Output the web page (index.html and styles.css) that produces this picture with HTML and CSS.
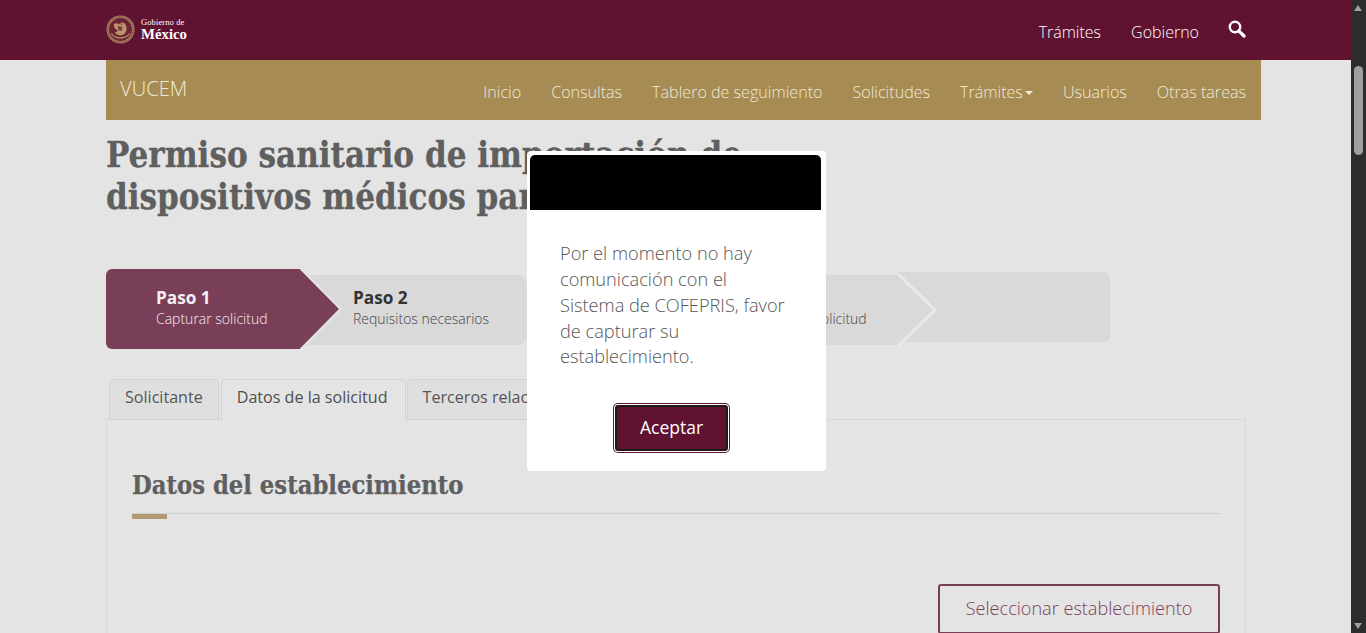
FILE: index.html
```html
<!DOCTYPE html>
<html lang="es">
<head>
<meta charset="utf-8">
<title>VUCEM</title>
<link rel="stylesheet" href="styles.css">
</head>
<body>
<div class="page">
  <header class="topbar">
    <div class="topbar-inner">
      <a class="logo">
        <svg class="emblem" viewBox="0 0 30 30" aria-hidden="true">
          <circle cx="15" cy="15" r="14.500" fill="#a9825a"/>
          <circle cx="15" cy="15" r="11.800" fill="#6b2336"/>
          <circle cx="15" cy="15" r="13.100" fill="none" stroke="#6b2336" stroke-width=".9" stroke-dasharray="1.500 1.200"/>
          <path d="M8 9.500c2-1.500 4-1 5.500.5 1-2.500 5-3 6.500-.5 2 3 1.500 6 .5 8-1.200 2.500-3.500 3.500-5.500 3.500s-5-1-6-3.500c1.500.5 3-.5 3.500-1.500-2.500-.5-4.500-3-4.500-6.500z" fill="#b9936a"/>
          <path d="M12 11.500l5 1-1 4-3-1zM15 8.500l2 .5-.5 2z" fill="#7d3a3f"/>
          <path d="M6 18.500c3 6 15 6 18 0l.8.6c-3 7-16.600 7-19.600 0z" fill="#b9936a"/>
        </svg>
        <span class="logo-text"><span class="logo-small">Gobierno de</span><span class="logo-big">México</span></span>
      </a>
      <nav class="topnav">
        <a>Trámites</a>
        <a>Gobierno</a>
        <svg class="search" viewBox="0 0 18 18" aria-hidden="true">
          <circle cx="7" cy="7" r="5.200" fill="none" stroke="#fff" stroke-width="2.400"/>
          <path d="M10.800 10.800 16 16" fill="none" stroke="#fff" stroke-width="3.200" stroke-linecap="round"/>
        </svg>
      </nav>
    </div>
  </header>

  <main class="container">
    <div class="subnav">
      <span class="brand">VUCEM</span>
      <nav class="subnav-links">
        <a>Inicio</a>
        <a>Consultas</a>
        <a>Tablero de seguimiento</a>
        <a>Solicitudes</a>
        <a class="dropdown">Trámites<i class="caret"></i></a>
        <a>Usuarios</a>
        <a>Otras tareas</a>
      </nav>
    </div>

    <h1 class="title">Permiso sanitario de importación de dispositivos médicos para uso personal</h1>

    <div class="steps">
      <div class="step step-active">
        <strong>Paso 1</strong>
        <span>Capturar solicitud</span>
        <svg class="arrow arrow-active" viewBox="0 0 42 84" aria-hidden="true"><path d="M0 2 39.500 42 0 82z" fill="#7a3f58"/><path d="M0 1 40.500 42 0 83" fill="none" stroke="#e4e4e4" stroke-width="2"/></svg>
      </div>
      <div class="step step-second">
        <strong>Paso 2</strong>
        <span>Requisitos necesarios</span>
      </div>
      <div class="step step-third">
        <strong>Paso 3</strong>
        <span>Firmar solicitud</span>
        <svg class="arrow arrow-plain" viewBox="0 0 40 74" aria-hidden="true"><path d="M0 2 36 37 0 72z" fill="#d9d9d9"/><path d="M0 1 37 37 0 73" fill="none" stroke="#e9e9e9" stroke-width="3"/></svg>
      </div>
      <div class="step step-last"></div>
    </div>

    <div class="tabs">
      <a class="tab">Solicitante</a>
      <a class="tab tab-current">Datos de la solicitud</a>
      <a class="tab">Terceros relacionados</a>
    </div>

    <section class="panel">
      <h2 class="section-title">Datos del establecimiento</h2>
      <div class="rule"></div>
      <div class="actions">
        <button class="btn-outline" type="button">Seleccionar establecimiento</button>
      </div>
    </section>
  </main>
</div>

<aside class="scrollbar" aria-hidden="true">
  <i class="sb-up"></i>
  <i class="sb-thumb"></i>
  <i class="sb-down"></i>
</aside>

<div class="modal" role="dialog">
  <div class="modal-head"></div>
  <p class="modal-text">Por el momento no hay comunicación con el Sistema de COFEPRIS, favor de capturar su establecimiento.</p>
  <div class="modal-foot"><button class="btn-primary" type="button">Aceptar</button></div>
</div>
</body>
</html>
```
FILE: styles.css
```css
* { box-sizing: border-box; }
html, body { height: 100%; margin: 0; }
body {
  display: flex;
  overflow: hidden;
  background: #e4e4e4;
  font-family: "Open Sans", "Noto Sans", sans-serif;
  color: #5c5c5c;
}
.page { flex: 1; min-width: 0; height: 100vh; overflow: hidden; }

.topbar { height: 60px; background: #601231; }
.topbar-inner {
  width: 1155px;
  height: 60px;
  margin-left: 106px;
  padding-right: 15px;
  display: flex;
  align-items: center;
  justify-content: space-between;
}
.logo { display: flex; align-items: center; gap: 6px; margin-top: -2px; }
.emblem { width: 29px; height: 29px; display: block; }
.logo-text { display: flex; flex-direction: column; color: #fff; font-family: "Liberation Serif", serif; margin-top: 1px; }
.logo-small { font-size: 8.500px; line-height: 9px; letter-spacing: .1px; }
.logo-big { font-size: 14.800px; line-height: 14px; font-weight: 700; }
.topnav { display: flex; align-items: center; gap: 30px; color: #fff; font-size: 16px; font-weight: 300; }
.search { width: 18px; height: 18px; margin: -3px 0 0 -1px; }
.topnav a { margin-top: 4px; }

.container { width: 1155px; margin-left: 106px; }
.subnav {
  height: 60px;
  background: #a68c53;
  display: flex;
  align-items: flex-start;
  justify-content: space-between;
  padding: 0 15px 0 14px;
  color: #f0e9d6;
}
.brand { font-size: 20.200px; line-height: 27px; margin-top: 15px; font-weight: 300; }
.subnav-links { display: flex; gap: 30px; font-size: 16.100px; font-weight: 300; line-height: 22px; margin-top: 21px; }
.dropdown { display: flex; align-items: center; }
.caret {
  display: block;
  margin: 2px 0 0 2px;
  border-top: 4px solid #f0e9d6;
  border-left: 4px solid transparent;
  border-right: 4px solid transparent;
}

.title {
  width: 705px;
  margin: 14px 0 0;
  font-family: "DejaVu Serif", serif;
  font-stretch: condensed;
  font-weight: 700;
  font-size: 34.600px;
  line-height: 42px;
  color: #5f5f5f;
  -webkit-text-stroke: .3px #5f5f5f;
}

.steps { display: flex; align-items: flex-start; margin-top: 51px; width: 1004px; }
.step { position: relative; flex: none; display: flex; flex-direction: column; justify-content: center; background: #d9d9d9; }
.step strong { font-size: 17.200px; line-height: 22px; font-weight: 700; color: #333; }
.step span { font-size: 14px; font-weight: 300; line-height: 20px; color: #444; }
.step-active { width: 194px; height: 80px; padding: 0 0 2px 50px; background: #7a3f58; border-radius: 6px 0 0 6px; z-index: 2; }
.step-active strong, .step-active span { color: #f6eef2; }
.step-second { width: 226px; height: 70px; margin-top: 6px; padding: 0 0 4px 53px; border-radius: 0 8px 8px 0; }
.step-third { width: 372px; height: 70px; margin-top: 6px; padding: 0 0 4px 244px; z-index: 1; border-radius: 8px 0 0 8px; }
.step-last { width: 212px; height: 70px; margin-top: 3px; border-radius: 0 6px 6px 0; }
.arrow { position: absolute; top: -2px; display: block; }
.arrow-active { left: 100%; width: 42px; height: 84px; }
.arrow-plain { left: 100%; width: 40px; height: 74px; }

.tabs { display: flex; height: 41px; margin: 30px 0 0 3px; position: relative; z-index: 1; }
.tab {
  height: 41px;
  padding: 0 15px;
  border: 1px solid #d3d3d3;
  border-radius: 4px 4px 0 0;
  background: #dfdfdf;
  font-size: 16.100px;
  line-height: 35px;
  color: #555;
}
.tab-current { margin: 0 1px 0 2px; padding: 0 17px 0 15px; background: #e4e4e4; border-bottom-color: #e4e4e4; color: #4f4f4f; height: 42px; }

.panel {
  width: 1140px;
  height: 300px;
  margin-top: -1px;
  padding: 47px 25px 0;
  border: 1px solid #d8d8d8;
}
.section-title {
  margin: 0;
  font-family: "DejaVu Serif", serif;
  font-stretch: condensed;
  font-weight: 700;
  font-size: 25.300px;
  line-height: 36px;
  color: #5f5f5f;
  -webkit-text-stroke: .25px #5f5f5f;
}
.rule { height: 1px; margin-top: 10px; background: #cfcfcf; position: relative; }
.rule::after { content: ""; position: absolute; left: 0; top: 1px; width: 35px; height: 5px; background: #b49874; }
.actions { display: flex; justify-content: flex-end; margin-top: 70px; }
.btn-outline {
  width: 282px;
  height: 50px;
  padding: 0 0 2px;
  border: 2px solid #7a3f58;
  border-radius: 3px;
  background: transparent;
  font: 300 18.100px "Open Sans", sans-serif;
  color: #7a3f58;
}

.scrollbar { flex: none; width: 15px; height: 100vh; background: #2c2c2c; position: relative; }
.sb-thumb { position: absolute; left: 3px; top: 66px; width: 9px; height: 89px; border-radius: 5px; background: #9f9f9f; }
.sb-up, .sb-down { position: absolute; left: 3px; border-left: 4.500px solid transparent; border-right: 4.500px solid transparent; }
.sb-up { top: 5px; border-bottom: 6px solid #9f9f9f; }
.sb-down { bottom: 4px; border-top: 6px solid #9f9f9f; }

.modal {
  position: absolute;
  left: 527px;
  top: 151px;
  z-index: 10;
  width: 299px;
  height: 320px;
  padding: 4px 5px 0 3px;
  background: #fff;
  border-radius: 4px;
}
.modal-head { height: 55px; background: #000; border-radius: 5px 5px 0 0; }
.modal-text {
  margin: 31.400px 0 0;
  padding: 0 29px 0 30px;
  font-size: 18.200px;
  font-weight: 300;
  line-height: 25.700px;
  color: #555;
}
.modal-foot { display: flex; justify-content: center; margin-top: 35.100px; padding-right: 8px; }
.btn-primary {
  width: 113px;
  height: 46px;
  padding: 0 0 2px;
  border: 2px solid #1d1a1c;
  border-radius: 3px;
  background: #601231;
  box-shadow: 0 0 0 1px #fff, 0 0 0 2px #601231;
  font: 400 17.500px "Open Sans", sans-serif;
  color: #fff;
}
```
